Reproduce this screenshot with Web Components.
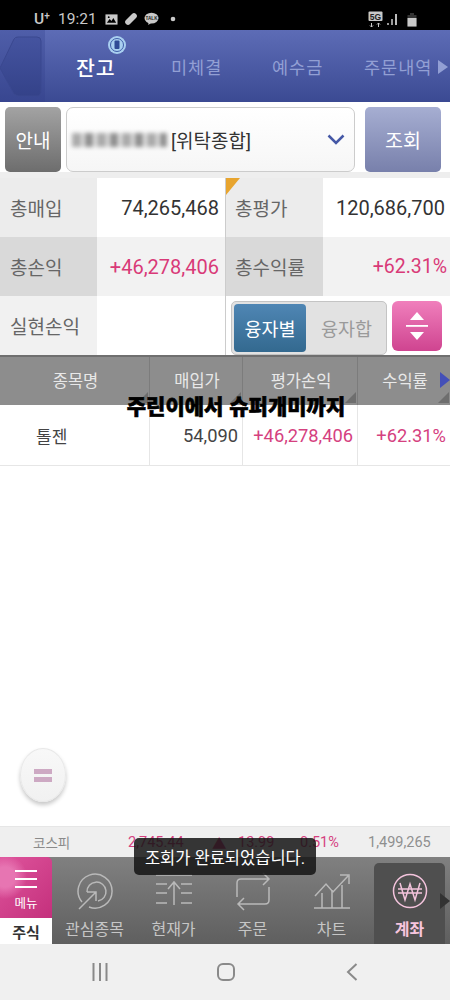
<!DOCTYPE html>
<html lang="ko">
<head>
<meta charset="utf-8">
<title>잔고</title>
<style>
  html, body { margin: 0; padding: 0; background: #fff; }
  body {
    width: 450px;
    height: 1000px;
    overflow: hidden;
    position: relative;
    display: flex;
    flex-direction: column;
    font-family: Roboto, "Noto Sans CJK KR", sans-serif;
  }
  .spacer { flex: 1; }
</style>
</head>
<body>
  <status-bar></status-bar>
  <tab-bar></tab-bar>
  <account-row></account-row>
  <summary-grid>
    <summary-cell label="총매입">74,265,468</summary-cell>
    <summary-cell label="총평가">120,686,700</summary-cell>
    <summary-cell label="총손익" tone="alt" class="up">+46,278,406</summary-cell>
    <summary-cell label="총수익률" tone="alt" class="up">+62.31%</summary-cell>
    <summary-cell label="실현손익" tone="soft"></summary-cell>
    <loan-toggle></loan-toggle>
  </summary-grid>
  <holdings-table></holdings-table>
  <div class="spacer"></div>
  <index-ticker></index-ticker>
  <bottom-nav>
    <nav-item label="관심종목">
      <svg viewBox="0 0 40 40" width="40" height="40" fill="none" stroke="#b9b9b9" stroke-width="1.5">
        <path d="M7 30A17 17 0 1 1 14 35"/>
        <path d="M12 20A9.500 9.500 0 1 1 23 29"/>
        <path d="M4 37L21 20M12 20H21V29"/>
      </svg>
    </nav-item>
    <nav-item label="현재가">
      <svg viewBox="0 0 40 40" width="40" height="40" fill="none" stroke="#b9b9b9" stroke-width="1.500">
        <path d="M2 3H38M2 12H13M2 21H13M2 31H13M27 12H38M27 21H38M27 31H38M20 33V11M14 17L20 10L26 17"/>
      </svg>
    </nav-item>
    <nav-item label="주문">
      <svg viewBox="0 0 40 40" width="40" height="40" fill="none" stroke="#b9b9b9" stroke-width="1.500">
        <path d="M4 25V11Q4 7 8 7H36M30 1L36 7L30 13"/>
        <path d="M36 15V28Q36 32 32 32H5M11 26L5 32L11 38"/>
      </svg>
    </nav-item>
    <nav-item label="차트">
      <svg viewBox="0 0 40 40" width="40" height="40" fill="none" stroke="#b9b9b9" stroke-width="1.500">
        <path d="M2 36H38M10 36V21M20 36V18M30 36V13"/>
        <path d="M3 24L14 12L21 20L36 4M28 3H37V12"/>
      </svg>
    </nav-item>
    <nav-item label="계좌" active>
      <svg viewBox="0 0 40 40" width="40" height="40" fill="none" stroke="#f3c3dc" stroke-width="1.500">
        <circle cx="20" cy="19" r="16.500"/>
        <path d="M10 11L15 28L20 12L25 28L30 11M8 17H32M8 21H32"/>
      </svg>
    </nav-item>
  </bottom-nav>
  <soft-keys></soft-keys>
  <float-button></float-button>
  <toast-message>조회가 완료되었습니다.</toast-message>
  <caption-text>주린이에서 슈퍼개미까지</caption-text>

<script>
const KR = 'Roboto, "Noto Sans CJK KR", sans-serif';

class StatusBar extends HTMLElement {
  constructor() {
    super();
    this.attachShadow({ mode: "open" }).innerHTML = `
<style>
  :host { display: flex; align-items: center; height: 30px; padding: 8px 0 0 34px; box-sizing: border-box; background: #000; color: #c9c9c9; font: 15.500px ${KR}; }
  .carrier { font-weight: 500; width: 24px; }
  .carrier sup { font-size: 10px; line-height: 0; vertical-align: 5px; }
  .time { width: 47px; }
  .icons { display: flex; align-items: center; gap: 6px; }
  .right { margin-left: auto; margin-right: 33px; display: flex; align-items: center; gap: 3px; }
  svg { display: block; }
</style>
<span class="carrier">U<sup>+</sup></span>
<span class="time">19:21</span>
<div class="icons">
  <svg width="13" height="13" viewBox="0 0 14 13"><rect x="0.500" y="1" width="13" height="11" fill="#c9c9c9"/><path d="M2 10L5 6L7 8L9 5L12 10Z" fill="#000"/><circle cx="4" cy="4" r="1" fill="#000"/></svg>
  <svg width="14" height="14" viewBox="0 0 14 14"><path d="M2 12Q0 10 2 8L8 2Q10 0 12 2T12 6L6 12Q4 14 2 12Z" fill="#c9c9c9"/></svg>
  <svg width="15" height="14" viewBox="0 0 16 14"><ellipse cx="8" cy="6" rx="7.500" ry="5.800" fill="#c9c9c9"/><path d="M5 10L4.500 13.500L8 11Z" fill="#c9c9c9"/><text x="8" y="8" text-anchor="middle" font-family="Liberation Sans" font-size="5" font-weight="700" fill="#222">TALK</text></svg>
  <svg width="14" height="14" viewBox="0 0 14 14" style="margin-left:1px"><circle cx="7" cy="7" r="2.300" fill="#c9c9c9"/></svg>
</div>
<div class="right">
  <svg width="15" height="17" viewBox="0 0 15 17"><rect x="0.500" y="0.500" width="14" height="9.500" rx="1" fill="#c9c9c9"/><text x="7.500" y="8.500" text-anchor="middle" font-family="Liberation Sans" font-size="8.500" font-weight="700" fill="#222">5G</text><path d="M3.500 12V16M2 14.500L3.500 16L5 14.500M10.500 16V12M9 13.500L10.500 12L12 13.500" stroke="#c9c9c9" fill="none"/></svg>
  <svg width="13" height="14" viewBox="0 0 13 14"><rect x="1" y="11" width="2" height="2" fill="#999"/><rect x="5" y="7" width="2" height="6" fill="#999"/><rect x="9" y="2" width="2" height="11" fill="#bbb"/></svg>
  <svg width="10" height="15" viewBox="0 0 10 15" style="margin-left:5px"><path d="M3 1H7V3H9.500V14.500H0.500V3H3Z" fill="#333"/><rect x="0.500" y="6" width="9" height="8.500" fill="#c9c9c9"/></svg>
</div>`;
  }
}
customElements.define("status-bar", StatusBar);

class TabBar extends HTMLElement {
  constructor() {
    super();
    this.attachShadow({ mode: "open" }).innerHTML = `
<style>
  :host { display: flex; position: relative; height: 72px; background: linear-gradient(#5d6cb6, #3b4a93); color: #929fd4; font: 17.500px ${KR}; }
  .back { width: 45px; background: linear-gradient(#4f5ea9, #384690); display: flex; align-items: center; }
  .tabs { flex: 1; display: flex; align-items: center; letter-spacing: 1px; padding-top: 1px; }
  .tab { white-space: nowrap; }
  .on { color: #fff; font-size: 20.500px; font-weight: 500; margin-left: 31px; width: 95px; }
  .t2 { width: 101px; }
  .t3 { width: 92px; }
  .badge { position: absolute; left: 108px; top: 6px; }
  .more { margin-left: 6px; width: 0; height: 0; border-left: 10px solid #929fd4; border-top: 7px solid transparent; border-bottom: 7px solid transparent; }
  svg { display: block; }
</style>
<div class="back">
  <svg width="45" height="72" viewBox="0 0 45 72"><defs><linearGradient id="b" x1="0" y1="0" x2="0" y2="1"><stop offset="0" stop-color="#4554a0"/><stop offset="1" stop-color="#344289"/></linearGradient></defs><path d="M0 38L14 9Q15 7 18 7H37Q41 7 41 11V60Q41 66 37 66H18L14 64L0 38Z" fill="url(#b)" stroke="#3a488f"/></svg>
</div>
<div class="tabs">
  <span class="tab on">잔고</span>
  <span class="tab t2">미체결</span>
  <span class="tab t3">예수금</span>
  <span class="tab">주문내역</span><span class="more"></span>
</div>
<svg class="badge" width="18" height="18" viewBox="0 0 18 18"><circle cx="9" cy="9" r="9" fill="#a9cff0"/><circle cx="9" cy="9" r="6.500" fill="none" stroke="#3f5da8"/><rect x="6.500" y="4.500" width="5" height="8.500" rx="1" fill="#2f4a96"/></svg>`;
  }
}
customElements.define("tab-bar", TabBar);

class AccountRow extends HTMLElement {
  constructor() {
    super();
    this.attachShadow({ mode: "open" }).innerHTML = `
<style>
  :host { display: flex; height: 76px; padding: 5px 9px 6px 5px; box-sizing: border-box; background: linear-gradient(#fff 70px, #eee 70px); font: 19px ${KR}; }
  .row { display: flex; flex: 1; height: 65px; }
  .btn { display: flex; align-items: center; justify-content: center; color: #fff; border-radius: 5px; }
  .info { width: 56px; background: linear-gradient(#a3a3a3, #6d6d6d); }
  .select { width: 289px; box-sizing: border-box; margin-left: 5px; border: 1px solid #ccc; border-radius: 7px; background: linear-gradient(#fff, #f6f6f6); display: flex; align-items: center; padding-left: 5px; color: #333; }
  .masked { display: flex; width: 95px; height: 14px; margin-right: 4px; filter: blur(2px); background: repeating-linear-gradient(90deg, #aaa 0 9px, #ddd 9px 13px, #8f8f8f 13px 21px, #e4e4e4 21px 25px); }
  .chev { margin-left: auto; margin-right: 9px; }
  .query { width: 76px; margin-left: 10px; background: linear-gradient(#a6aed2, #7880ab); font-size: 19.500px; }
  svg { display: block; }
</style>
<div class="row">
  <div class="btn info">안내</div>
  <div class="select">
    <span class="masked"></span><span>[위탁종합]</span>
    <svg class="chev" width="18" height="11" viewBox="0 0 18 11"><path d="M1.500 1.500L9 9L16.500 1.500" fill="none" stroke="#4558a6" stroke-width="2.500"/></svg>
  </div>
  <div class="btn query">조회</div>
</div>`;
  }
}
customElements.define("account-row", AccountRow);

class SummaryGrid extends HTMLElement {
  constructor() {
    super();
    this.attachShadow({ mode: "open" }).innerHTML = `
<style>
  :host { display: grid; grid-template-columns: 225px 225px; grid-auto-rows: 59px; position: relative; height: 177px; background: #fff; }
  .corner { position: absolute; left: 226px; top: 0; width: 0; height: 0; border-top: 17px solid #e8a52f; border-right: 14px solid transparent; }
  .line { position: absolute; left: 225px; top: 0; bottom: 0; width: 1px; background: #ccc; }
</style>
<slot></slot>
<div class="line"></div>
<div class="corner"></div>`;
  }
}
customElements.define("summary-grid", SummaryGrid);

class SummaryCell extends HTMLElement {
  constructor() {
    super();
    this.attachShadow({ mode: "open" }).innerHTML = `
<style>
  :host { display: grid; grid-template-columns: 97px 1fr; font: 20px ${KR}; color: #333; }
  :host(:nth-child(even)) { grid-template-columns: 98px 1fr; --pad: 5px; }
  .label { display: flex; align-items: center; padding-left: 10px; background: #ececec; color: #666; font-size: 19px; }
  .value { display: flex; align-items: center; justify-content: flex-end; padding-right: var(--pad, 6px); background: #fff; }
  :host([tone="alt"]) .label { background: #d9d9d9; }
  :host([tone="alt"]) .value { background: #f2f2f2; }
  :host([tone="soft"]) .label { background: #f1f1f1; }
  :host(.up) { color: #d93a78; }
  :host(.up:nth-child(even)) { --pad: 3px; font-size: 19.500px; }
</style>
<div class="label"></div>
<div class="value"><slot></slot></div>`;
    this.shadowRoot.querySelector(".label").textContent = this.getAttribute("label");
  }
}
customElements.define("summary-cell", SummaryCell);

class LoanToggle extends HTMLElement {
  constructor() {
    super();
    this.attachShadow({ mode: "open" }).innerHTML = `
<style>
  :host { display: flex; padding: 5px 8px 0 6px; font: 18.500px ${KR}; }
  .group { width: 156px; height: 54px; box-sizing: border-box; border: 1px solid #c4c4c4; border-radius: 5px; background: #e2e2e2; padding: 2px; display: flex; }
  .group span { flex: 1; display: flex; align-items: center; justify-content: center; color: #9a9a9a; }
  .group .on { flex: 0 0 72px; border-radius: 4px; color: #fff; background: linear-gradient(#4f86b4, #33698f); margin-right: 3px; }
  .sort { width: 50px; height: 50px; margin-left: 5px; border-radius: 6px; background: linear-gradient(#f07fbc, #cf4490); display: flex; align-items: center; justify-content: center; }
  svg { display: block; }
</style>
<div class="group"><span class="on">융자별</span><span>융자합</span></div>
<div class="sort">
  <svg width="24" height="32" viewBox="0 0 24 32" fill="#fff"><path d="M5 10L12 2L19 10Z"/><rect x="1" y="15" width="22" height="1.800"/><path d="M5 22H19L12 30Z"/></svg>
</div>`;
  }
}
customElements.define("loan-toggle", LoanToggle);

class HoldingsTable extends HTMLElement {
  constructor() {
    super();
    this.attachShadow({ mode: "open" }).innerHTML = `
<style>
  :host { display: block; position: relative; font: 18.300px ${KR}; }
  .row { display: grid; grid-template-columns: 150px 93px 115px 92px; }
  .head { height: 50px; box-sizing: border-box; border-top: 2px solid #6f6f6f; background: #8d8d8d; color: #e8e8e8; font-size: 16.500px; }
  .head div { position: relative; display: flex; align-items: center; justify-content: center; border-right: 1px solid #7c7c7c; padding: 0 0 2px 2px; }
  .head div:last-child { border-right: 0; }
  .head div::after { content: ""; position: absolute; right: 1px; bottom: 2px; border-left: 11px solid transparent; border-bottom: 11px solid #6e6e6e; }
  .arrow { position: absolute; right: 0; top: 15px; border-left: 10px solid #4450b8; border-top: 8px solid transparent; border-bottom: 8px solid transparent; }
  .body { height: 61px; box-sizing: border-box; border-bottom: 1px solid #e6e6e6; color: #444; }
  .body div { display: flex; align-items: center; justify-content: flex-end; padding-right: 4px; border-right: 1px solid #e6e6e6; }
  .body div:first-child { justify-content: flex-start; padding-left: 36px; font-size: 17px; }
  .body div:last-child { border-right: 0; }
  .up { color: #d5417f; }
</style>
<div class="row head">
  <div>종목명</div><div>매입가</div><div>평가손익</div><div>수익률<span class="arrow"></span></div>
</div>
<div class="row body">
  <div>톨젠</div><div>54,090</div><div class="up">+46,278,406</div><div class="up">+62.31%</div>
</div>`;
  }
}
customElements.define("holdings-table", HoldingsTable);

class IndexTicker extends HTMLElement {
  constructor() {
    super();
    this.attachShadow({ mode: "open" }).innerHTML = `
<style>
  :host { display: grid; align-items: center; height: 31px; padding-left: 33px; grid-template-columns: 95px 84px 26px 62px 68px 1fr; box-sizing: border-box; background: #efefef; border-top: 1px solid #e6e6e6; color: #d5417f; font: 14.500px ${KR}; }
  .name { color: #8a8a8a; font-size: 13.500px; }
  .vol { color: #8f8f8f; }
</style>
<span class="name">코스피</span><span>2,745.44</span><span>▲</span><span>13.99</span><span>0.51%</span><span class="vol">1,499,265</span>`;
  }
}
customElements.define("index-ticker", IndexTicker);

class BottomNav extends HTMLElement {
  constructor() {
    super();
    this.attachShadow({ mode: "open" }).innerHTML = `
<style>
  :host { display: flex; position: relative; height: 87px; background: linear-gradient(#808080, #5f5f5f); font: 16px ${KR}; }
  .menu { width: 53px; display: flex; flex-direction: column; }
  .pink { height: 61px; border-radius: 0 5px 0 0; color: #fff; display: flex; flex-direction: column; align-items: center; font-size: 12.500px; padding-top: 12px; box-sizing: border-box;
    background: radial-gradient(circle at 5px 20px, #e775b2 0 10px, transparent 22px), linear-gradient(135deg, #de549c, #c4307c); }
  .stock { flex: 1; background: #fff; color: #333; font-weight: 700; font-size: 15px; display: flex; align-items: center; justify-content: center; }
  .items { flex: 1; display: grid; grid-template-columns: repeat(5, 79px); padding-left: 3px; }
  .more { position: absolute; right: 0; top: 36px; border-left: 10px solid #333; border-top: 8px solid transparent; border-bottom: 8px solid transparent; }
  svg { display: block; margin-bottom: 4px; }
</style>
<div class="menu">
  <div class="pink">
    <svg width="22" height="20" viewBox="0 0 22 20" fill="#fff"><rect y="1" width="22" height="2"/><rect y="9" width="22" height="2"/><rect y="17" width="22" height="2"/></svg>
    메뉴
  </div>
  <div class="stock">주식</div>
</div>
<div class="items"><slot></slot></div>
<div class="more"></div>`;
  }
}
customElements.define("bottom-nav", BottomNav);

class NavItem extends HTMLElement {
  constructor() {
    super();
    this.attachShadow({ mode: "open" }).innerHTML = `
<style>
  :host { display: flex; flex-direction: column; align-items: center; padding-top: 15px; box-sizing: border-box; color: #c6c6c6; position: relative; white-space: nowrap; }
  :host([active]) { color: #f6c5de; font-weight: 700; background: #4f4f4f; border-radius: 5px 5px 0 0; margin: 6px 5px 0 3px; padding-top: 9px; }
  .icon { height: 40px; }
  .text { margin-top: 6px; font-size: 16px; line-height: 24px; }
</style>
<div class="icon"><slot></slot></div>
<div class="text"></div>`;
    this.shadowRoot.querySelector(".text").textContent = this.getAttribute("label");
  }
}
customElements.define("nav-item", NavItem);

class SoftKeys extends HTMLElement {
  constructor() {
    super();
    this.attachShadow({ mode: "open" }).innerHTML = `
<style>
  :host { display: grid; grid-template-columns: 1fr 1fr 1fr; height: 56px; padding: 0 35px 0 37px; box-sizing: border-box; background: #f0f0f0; align-items: center; justify-items: center; }
  svg { display: block; }
</style>
<svg width="16" height="18" viewBox="0 0 16 18" fill="#8a8a8a"><rect x="0.500" width="2" height="18"/><rect x="7" width="2" height="18"/><rect x="13.500" width="2" height="18"/></svg>
<svg width="18" height="18" viewBox="0 0 18 18"><rect x="1" y="1" width="16" height="16" rx="5" fill="none" stroke="#8a8a8a" stroke-width="2"/></svg>
<svg width="12" height="18" viewBox="0 0 12 18"><path d="M10.500 1L2 9L10.500 17" fill="none" stroke="#8a8a8a" stroke-width="2"/></svg>`;
  }
}
customElements.define("soft-keys", SoftKeys);

class FloatButton extends HTMLElement {
  constructor() {
    super();
    this.attachShadow({ mode: "open" }).innerHTML = `
<style>
  :host { position: absolute; left: 20px; top: 748px; width: 46px; height: 54px; border-radius: 50%; background: linear-gradient(#f8f8f8, #f1f1f1); border: 1px solid #e8e8e8; box-sizing: border-box; box-shadow: 0 3px 4px rgba(0,0,0,0.22); display: flex; align-items: center; justify-content: center; }
  span { display: block; width: 18px; height: 13px; background: linear-gradient(#cda9c3 0 5px, transparent 5px 8px, #cda9c3 8px 13px); }
</style>
<span></span>`;
  }
}
customElements.define("float-button", FloatButton);

class ToastMessage extends HTMLElement {
  constructor() {
    super();
    this.attachShadow({ mode: "open" }).innerHTML = `
<style>
  :host { position: absolute; left: 134px; top: 838px; width: 182px; height: 37px; border-radius: 5px; background: rgba(20,20,20,0.85); color: #fff; font: 16.500px ${KR}; display: flex; align-items: center; justify-content: center; white-space: nowrap; }
</style>
<slot></slot>`;
  }
}
customElements.define("toast-message", ToastMessage);

class CaptionText extends HTMLElement {
  constructor() {
    super();
    this.attachShadow({ mode: "open" }).innerHTML = `
<style>
  :host { position: absolute; left: 128px; top: 393px; width: 216px; height: 24px; display: flex; align-items: center; justify-content: center; white-space: nowrap; color: #000; font: 900 21px "Noto Sans CJK KR", sans-serif; -webkit-text-stroke: 0.6px #000; }
</style>
<slot></slot>`;
  }
}
customElements.define("caption-text", CaptionText);
</script>
</body>
</html>
